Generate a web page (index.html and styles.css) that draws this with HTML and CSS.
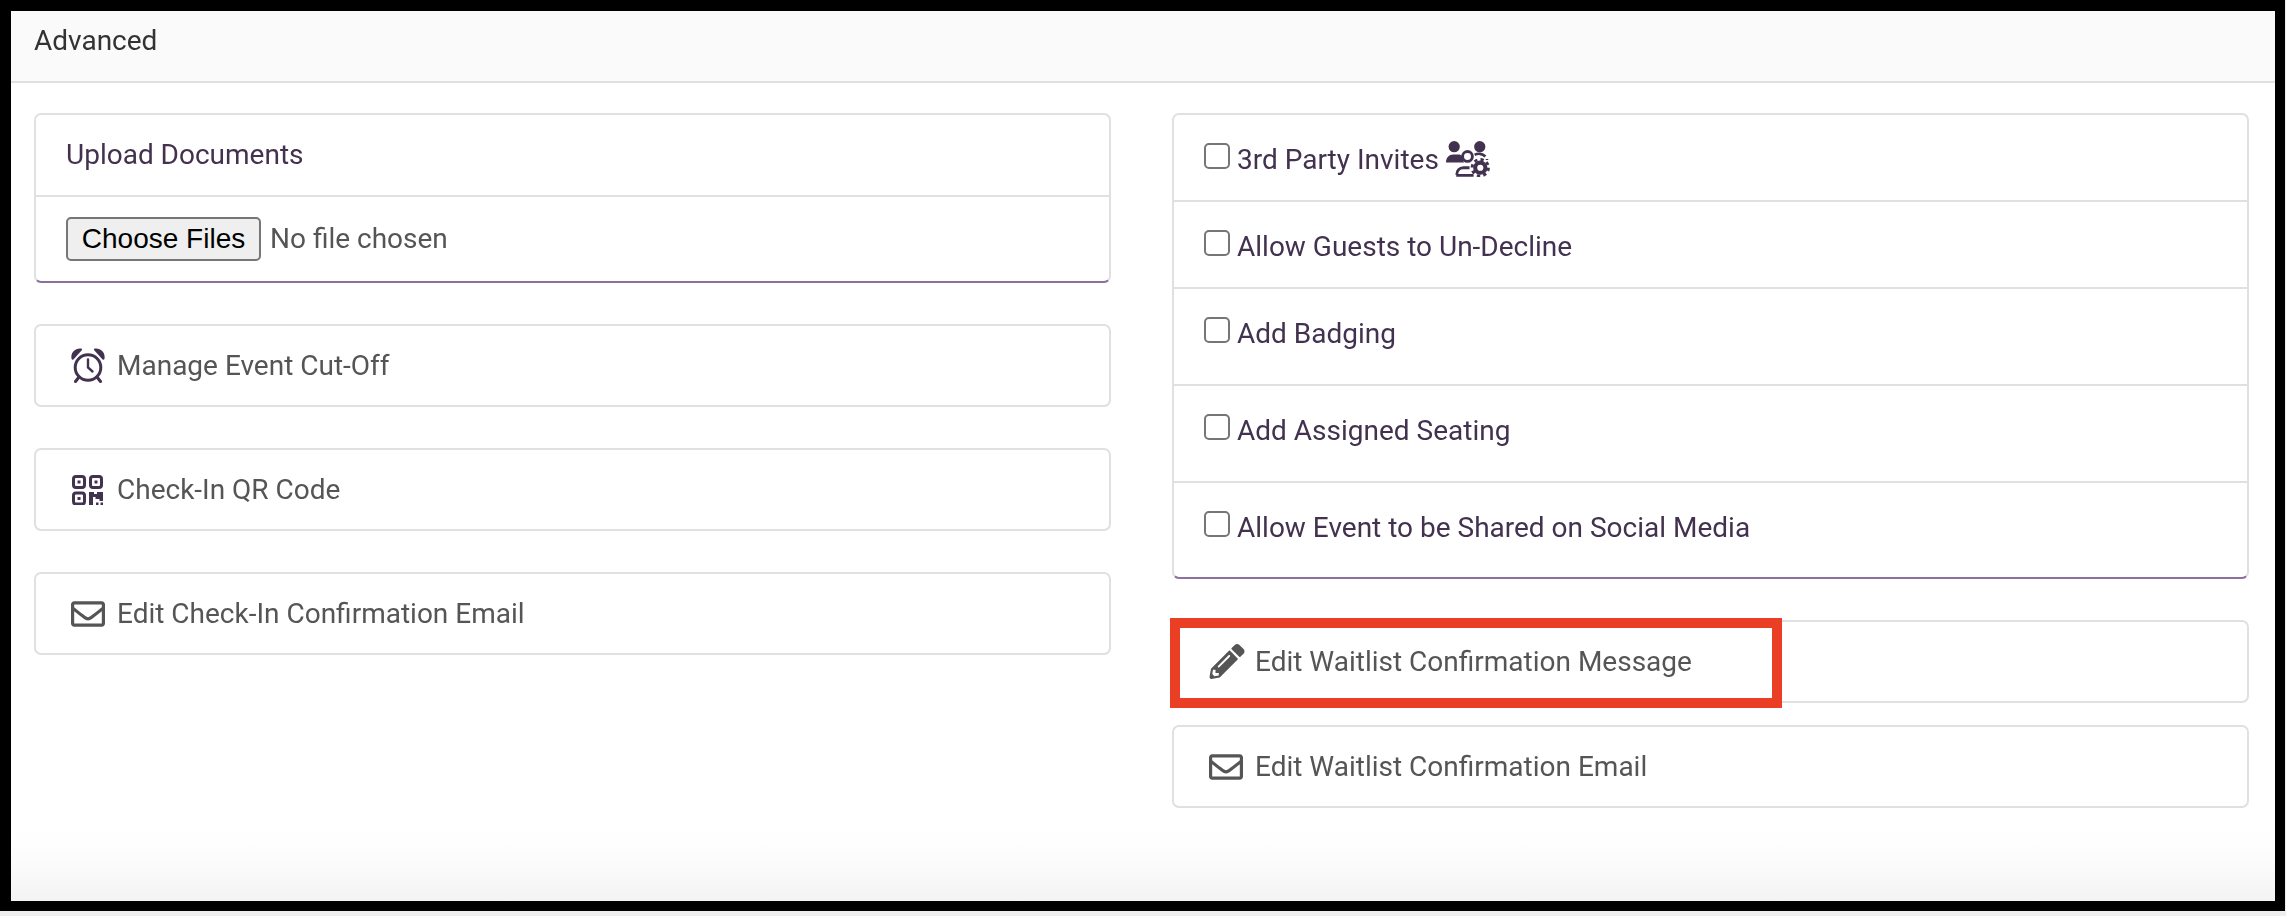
FILE: index.html
```html
<!DOCTYPE html>
<html lang="en">
<head>
<meta charset="utf-8">
<title>Advanced</title>
<link rel="stylesheet" href="styles.css">
</head>
<body>
<div class="frame">
  <header class="panel-head">Advanced</header>
  <main class="panel-body">
    <section class="col col-left">
      <div class="card card-upload">
        <div class="upload-title">Upload Documents</div>
        <div class="upload-body"><input class="file" type="file" multiple></div>
      </div>
      <div class="card link">
        <svg class="icon icon-clock" viewBox="0 0 34 35" aria-hidden="true">
          <circle cx="17" cy="19.500" r="12.800" fill="none" stroke="currentColor" stroke-width="3"/>
          <path d="M.6 11C-.8 5 4 -.2 10 .6c1 .1 1.400.9.8 1.600L2.400 11.400c-.6.6-1.500.4-1.800-.4z" fill="currentColor"/>
          <path d="M33.400 11C34.800 5 30 -.2 24 .6c-1 .1-1.400.9-.8 1.600l8.400 9.200c.6.6 1.500.4 1.800-.4z" fill="currentColor"/>
          <path d="M17 11.500V19.500L21.500 23.500" fill="none" stroke="currentColor" stroke-width="2.400" stroke-linecap="round"/>
          <path d="M8 29 4.500 33.500M26 29 29.500 33.500" fill="none" stroke="currentColor" stroke-width="3" stroke-linecap="round"/>
        </svg>
        <span>Manage Event Cut-Off</span>
      </div>
      <div class="card link">
        <svg class="icon icon-qr" viewBox="0 0 31 30" aria-hidden="true">
          <g fill="none" stroke="currentColor" stroke-width="3">
            <rect x="1.500" y="1.500" width="11" height="11" rx="2.500"/>
            <rect x="18.500" y="1.500" width="11" height="11" rx="2.500"/>
            <rect x="1.500" y="18" width="11" height="11" rx="2.500"/>
          </g>
          <g fill="currentColor">
            <rect x="5.500" y="5.500" width="3" height="3"/>
            <rect x="22.500" y="5.500" width="3" height="3"/>
            <rect x="5.500" y="22" width="3" height="3"/>
            <path d="M17 17h5v2h3v-2h6v9h-3.500v-2h-4v-2H21v8h-4z"/>
            <rect x="24" y="27.500" width="2.500" height="2.500"/>
            <rect x="28.500" y="27.500" width="2.500" height="2.500"/>
          </g>
        </svg>
        <span>Check-In QR Code</span>
      </div>
      <div class="card link">
        <svg class="icon icon-mail" viewBox="0 0 512 384" aria-hidden="true"><path fill="currentColor" transform="translate(0 -64)" d="M464 64H48C21.49 64 0 85.49 0 112v288c0 26.51 21.49 48 48 48h416c26.51 0 48-21.49 48-48V112c0-26.51-21.49-48-48-48zm0 48v40.805c-22.422 18.259-58.168 46.651-134.587 106.49-16.841 13.247-50.201 45.072-73.413 44.701-23.208.375-56.579-31.459-73.413-44.701C106.18 199.465 70.425 171.067 48 152.805V112h416zM48 400V214.398c22.914 18.251 55.409 43.862 104.938 82.646 21.857 17.205 60.134 55.186 103.062 54.955 42.717.231 80.509-37.199 103.053-54.947 49.528-38.783 82.032-64.401 104.947-82.653V400H48z"/></svg>
        <span>Edit Check-In Confirmation Email</span>
      </div>
    </section>
    <section class="col col-right">
      <div class="card card-list">
        <label class="check-row"><input class="check" type="checkbox"><span>3rd Party Invites</span>
          <svg class="icon-users" viewBox="0 0 43 35" aria-hidden="true">
            <g fill="currentColor">
              <circle cx="8" cy="5.500" r="5.500"/>
              <circle cx="33" cy="5.500" r="5.500"/>
              <path d="M0 21c0-5 3-8 7-8h5c1.800 0 3 .6 4 1.500-.2 2.400.6 4.600 1.800 6.500z"/>
            </g>
            <g fill="none" stroke="currentColor">
              <circle cx="21" cy="15" r="4.800" stroke-width="2.800"/>
              <path d="M10 33.500H27M10.500 33c0-4 2.500-7 6.500-7h6" stroke-width="2.800"/>
              <path d="M28 13.500c3-1.800 7.500-1.500 10.500 1.500M40 17.500v1" stroke-width="2.600"/>
            </g>
            <circle cx="33.500" cy="26" r="9.500" fill="#fff"/>
            <circle cx="33.500" cy="26" r="5" fill="none" stroke="currentColor" stroke-width="4"/>
            <circle cx="33.500" cy="26" r="8" fill="none" stroke="currentColor" stroke-width="2.800" stroke-dasharray="3.200 3.080"/>
          </svg>
        </label>
        <label class="check-row"><input class="check" type="checkbox"><span>Allow Guests to Un-Decline</span></label>
        <label class="check-row check-row-tall"><input class="check" type="checkbox"><span>Add Badging</span></label>
        <label class="check-row check-row-tall"><input class="check" type="checkbox"><span>Add Assigned Seating</span></label>
        <label class="check-row check-row-last"><input class="check" type="checkbox"><span>Allow Event to be Shared on Social Media</span></label>
      </div>
      <div class="card link link-right link-flagged">
        <svg class="icon icon-pencil" viewBox="0 0 512 512" aria-hidden="true"><path fill="currentColor" d="M497.900 142.100l-46.100 46.100c-4.700 4.700-12.300 4.700-17 0l-111-111c-4.700-4.700-4.700-12.300 0-17l46.100-46.100c18.700-18.700 49.100-18.700 67.900 0l60.100 60.100c18.800 18.700 18.800 49.100 0 67.900zM284.200 99.800L21.600 362.400.4 483.900c-2.900 16.400 11.400 30.600 27.800 27.800l121.500-21.300 262.600-262.600c4.700-4.700 4.700-12.300 0-17l-111-111c-4.800-4.700-12.400-4.700-17.100 0zM124.100 339.900c-5.500-5.500-5.500-14.300 0-19.800l154-154c5.500-5.500 14.300-5.500 19.800 0s5.500 14.300 0 19.800l-154 154c-5.500 5.500-14.300 5.500-19.800 0zM88 424h48v36.300l-64.500 11.300-31.100-31.100L51.700 376H88v48z"/></svg>
        <span>Edit Waitlist Confirmation Message</span>
        <div class="flag"></div>
      </div>
      <div class="card link link-right">
        <svg class="icon icon-mail" viewBox="0 0 512 384" aria-hidden="true"><path fill="currentColor" transform="translate(0 -64)" d="M464 64H48C21.49 64 0 85.49 0 112v288c0 26.51 21.49 48 48 48h416c26.51 0 48-21.49 48-48V112c0-26.51-21.49-48-48-48zm0 48v40.805c-22.422 18.259-58.168 46.651-134.587 106.49-16.841 13.247-50.201 45.072-73.413 44.701-23.208.375-56.579-31.459-73.413-44.701C106.18 199.465 70.425 171.067 48 152.805V112h416zM48 400V214.398c22.914 18.251 55.409 43.862 104.938 82.646 21.857 17.205 60.134 55.186 103.062 54.955 42.717.231 80.509-37.199 103.053-54.947 49.528-38.783 82.032-64.401 104.947-82.653V400H48z"/></svg>
        <span>Edit Waitlist Confirmation Email</span>
      </div>
    </section>
  </main>
</div>
</body>
</html>
```

FILE: styles.css
```css
* { box-sizing: border-box; }

html, body { height: 100%; }

body {
  margin: 0;
  background: #eeeeee;
  padding: 0 1px 5px 0;
  font-family: Roboto, "Liberation Sans", sans-serif;
  font-size: 28px;
  line-height: 40px;
  color: #43324f;
}

.frame {
  height: 100%;
  border: 11px solid #000;
  border-right-width: 10px;
  border-bottom-width: 10px;
  background: linear-gradient(to bottom, #fff 0, #fff 92%, #fbfbfb 96%, #f3f3f3 100%);
  display: flex;
  flex-direction: column;
}

/* the reference is a slightly soft, upscaled capture */
.panel-head, .upload-title, .file, .link > span, .icon, .check-row {
  filter: blur(0.4px);
}

.panel-head {
  height: 72px;
  flex: none;
  padding: 10px 23px 0;
  background: #fafafa;
  border-bottom: 2px solid #e0e0e0;
  color: #333;
}

.panel-body {
  display: grid;
  grid-template-columns: 1fr 1fr;
  column-gap: 61px;
  padding: 30px 26px 0 23px;
}

.col { display: flex; flex-direction: column; }

.col-left { gap: 41px; }

.card {
  border: 2px solid #e0e0e0;
  border-radius: 7px;
  background: #fff;
}

.card-upload, .card-list { border-bottom-color: #8b6f9f; }

.card-upload { height: 170px; }

.upload-title {
  height: 82px;
  padding: 20px 30px 0;
  border-bottom: 2px solid #e0e0e0;
}

.upload-body { padding: 20px 30px 0; }

.file {
  display: block;
  width: 100%;
  font-family: Roboto, sans-serif;
  font-size: 28px;
  line-height: 44px;
  color: #555;
}

.file::file-selector-button {
  height: 44px;
  width: 195px;
  margin: 0 9px 0 0;
  padding: 0;
  font-family: "Liberation Sans", Arial, sans-serif;
  font-size: 28px;
  color: #000;
  background: #efefef;
  border: 2px solid #767676;
  border-radius: 5px;
}

.link {
  height: 83px;
  padding-left: 35px;
  display: flex;
  align-items: center;
  color: #555;
}

.icon { display: block; flex: none; margin-right: 12px; }

.icon-clock { width: 34px; height: 35px; color: #43324f; }

.icon-qr { width: 31px; height: 30px; margin-left: 1px; margin-right: 14px; color: #43324f; }

.icon-mail { width: 34px; height: 26px; color: #555; }

.icon-pencil { width: 36px; height: 35px; margin-right: 10px; color: #555; }

.col-right { gap: 22px; }

.card-list { margin-bottom: 19px; }

.check-row {
  display: flex;
  align-items: flex-start;
  height: 87px;
  padding: 25px 31px 0 30px;
  border-bottom: 2px solid #e0e0e0;
}

.check-row-tall { height: 97px; }

.check-row-last { height: 94px; border-bottom: 0; }

.check {
  appearance: none;
  flex: none;
  width: 26px;
  height: 26px;
  margin: 3px 7px 0 0;
  background: #fff;
  border: 2px solid #767676;
  border-radius: 5px;
}

.icon-users { width: 44px; height: 36px; margin: 1px 0 0 7px; flex: none; color: #43324f; }

.link-right { padding-left: 35px; }

.link-flagged { position: relative; }

.flag {
  position: absolute;
  left: -4px;
  top: -4px;
  width: 612px;
  height: 90px;
  border: 10px solid #ea3f25;
  pointer-events: none;
}
```
